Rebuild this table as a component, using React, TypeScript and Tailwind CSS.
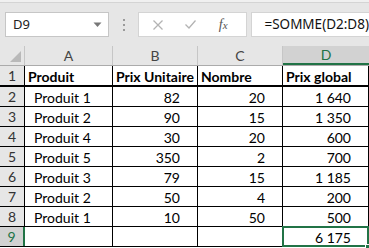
type Row = { n: number; a: string; b: string; c: string; d: string; bold?: boolean };

const rows: Row[] = [
  { n: 1, a: "Produit", b: "Prix Unitaire", c: "Nombre", d: "Prix global", bold: true },
  { n: 2, a: "Produit 1", b: "82", c: "20", d: "1 640" },
  { n: 3, a: "Produit 2", b: "90", c: "15", d: "1 350" },
  { n: 4, a: "Produit 4", b: "30", c: "20", d: "600" },
  { n: 5, a: "Produit 5", b: "350", c: "2", d: "700" },
  { n: 6, a: "Produit 3", b: "79", c: "15", d: "1 185" },
  { n: 7, a: "Produit 2", b: "50", c: "4", d: "200" },
  { n: 8, a: "Produit 1", b: "10", c: "50", d: "500" },
  { n: 9, a: "", b: "", c: "", d: "6 175" },
];

function FormulaBar() {
  return (
    <div className="relative h-[46px] bg-[#e6e6e6]">
      <div className="absolute left-0 right-0 top-0 h-[2px] bg-[#f0f0f0]" />
      <div className="absolute left-0 right-0 top-[2px] h-[1px] bg-[#d4d4d4]" />
      <div className="flex items-start pt-[12px] h-full">
        {/* name box */}
        <div className="ml-[5px] w-[104px] h-[25px] bg-white border border-[#c6c6c6] flex items-center justify-between pl-[7px] pr-[6px] box-border">
          <span className="text-[13px] text-[#222] font-['Noto_Sans',sans-serif]">D9</span>
          <svg width="9" height="6" viewBox="0 0 9 6">
            <path d="M0.5 0.5 L8.5 0.5 L4.5 5 Z" fill="#777" />
          </svg>
        </div>
        {/* grip dots */}
        <div className="ml-[14px] mt-[7px] flex flex-col gap-[3px]">
          <div className="w-[2px] h-[2px] bg-[#9a9a9a]" />
          <div className="w-[2px] h-[2px] bg-[#9a9a9a]" />
          <div className="w-[2px] h-[2px] bg-[#9a9a9a]" />
        </div>
        {/* cancel / enter / insert function */}
        <div className="ml-[13px] w-[110px] h-[25px] bg-white border border-[#d4d4d4] box-border flex items-center">
          <svg width="10" height="10" viewBox="0 0 10 10" className="ml-[14px]">
            <path d="M0.5 0.5 L9.5 9.5 M9.5 0.5 L0.5 9.5" stroke="#b3b3b3" strokeWidth="1.3" />
          </svg>
          <svg width="11" height="9" viewBox="0 0 11 9" className="ml-[22px]">
            <path d="M0.5 4.5 L4 8 L10.5 0.5" stroke="#b3b3b3" strokeWidth="1.3" fill="none" />
          </svg>
          <span className="ml-[23px] text-[14px] italic text-[#555] font-['Liberation_Serif',serif] leading-none">
            f<span className="text-[11px]">x</span>
          </span>
        </div>
        {/* formula input */}
        <div className="ml-[4px] flex-1 h-[25px] bg-white border border-r-0 border-[#d4d4d4] box-border flex items-center pl-[12px]">
          <span className="text-[13.5px] text-[#111] font-['Noto_Sans',sans-serif] whitespace-nowrap">=SOMME(D2:D8)</span>
        </div>
      </div>
    </div>
  );
}

function HeaderRow() {
  const hdr = "h-full flex items-center justify-center border-r border-[#c6c6c6] box-border text-[14px] text-[#444]";
  return (
    <div className="flex h-[20px] bg-[#e6e6e6] border-b border-[#ababab] box-border">
      <div className="w-[25px] h-full relative border-r border-[#c6c6c6] box-border">
        <svg width="11" height="11" viewBox="0 0 11 11" className="absolute right-[3px] bottom-[3px]">
          <path d="M11 0 L11 11 L0 11 Z" fill="#b9b9b9" />
        </svg>
      </div>
      <div className={`w-[88px] ${hdr}`}>A</div>
      <div className={`w-[85px] ${hdr}`}>B</div>
      <div className={`w-[85px] ${hdr}`}>C</div>
      <div className="w-[86px] h-full flex items-center justify-center bg-[#d2d2d2] border-b-2 border-[#217346] box-border text-[14px] text-[#217346]">
        D
      </div>
    </div>
  );
}

function DataRow({ r }: { r: Row }) {
  const selected = r.n === 9;
  const h = r.n === 1 ? "h-[21px] border-b-2" : "h-[20px] border-b";
  const cell = "h-full flex items-end leading-[17px] border-r border-black box-border whitespace-nowrap overflow-hidden";
  const txt = r.bold ? "font-bold" : "";
  const num = r.bold ? "pl-[3px]" : "justify-end pr-[17px]";
  return (
    <div className={`flex ${h} border-black box-border`}>
      <div
        className={`w-[25px] h-full flex items-center justify-center box-border text-[14px] ${
          selected
            ? "bg-[#d2d2d2] text-[#217346] border-r-2 border-[#217346]"
            : "bg-[#e6e6e6] text-[#333] border-r border-black"
        }`}
      >
        {r.n}
      </div>
      <div className={`w-[88px] ${cell} ${r.bold ? "pl-[3px]" : "pl-[9px]"} ${txt}`}>{r.a}</div>
      <div className={`w-[85px] ${cell} ${num} ${txt}`}>{r.b}</div>
      <div className={`w-[85px] ${cell} ${num} ${txt}`}>{r.c}</div>
      <div className={`relative w-[86px] ${cell} ${num} ${txt} overflow-visible`}>
        {r.d}
        {selected && (
          <>
            <div className="absolute -left-[1px] -top-[1px] -right-[1px] -bottom-[1px] border-2 border-[#217346]" />
            <div className="absolute -right-[2px] -bottom-[3px] w-[5px] h-[5px] bg-[#217346] border border-white" />
          </>
        )}
      </div>
    </div>
  );
}

export default function App() {
  return (
    <div className="w-[369px] h-[248px] overflow-hidden bg-white font-['Lato',sans-serif] text-[14px] text-black">
      <FormulaBar />
      <HeaderRow />
      {rows.map((r) => (
        <DataRow key={r.n} r={r} />
      ))}
    </div>
  );
}
